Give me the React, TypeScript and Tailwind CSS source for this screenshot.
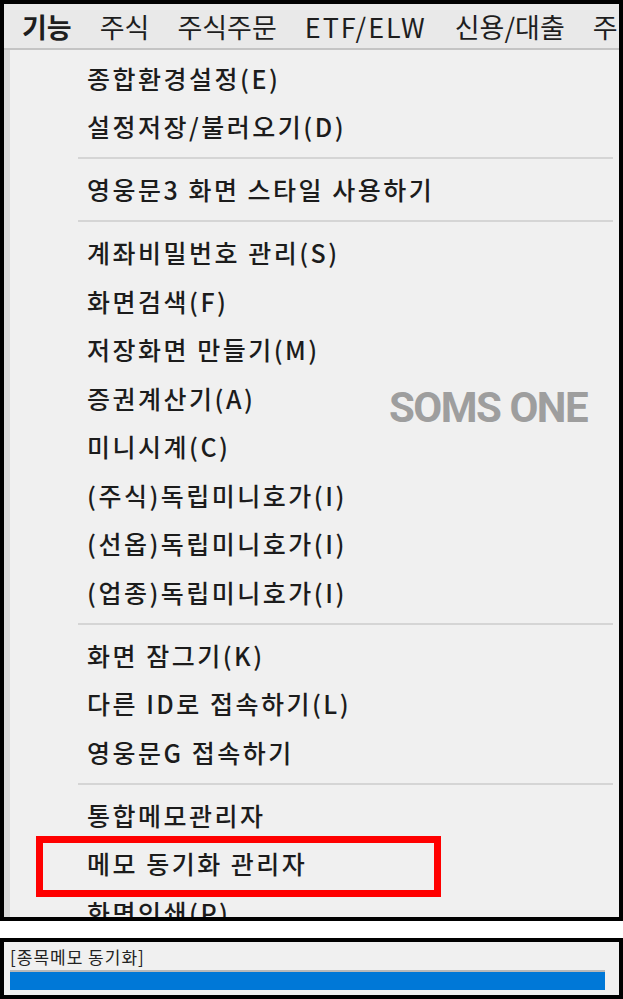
import React from "react";

type Entry = { t: string } | { sep: true };

const entries: Entry[] = [
  { t: "종합환경설정(E)" },
  { t: "설정저장/불러오기(D)" },
  { sep: true },
  { t: "영웅문3 화면 스타일 사용하기" },
  { sep: true },
  { t: "계좌비밀번호 관리(S)" },
  { t: "화면검색(F)" },
  { t: "저장화면 만들기(M)" },
  { t: "증권계산기(A)" },
  { t: "미니시계(C)" },
  { t: "(주식)독립미니호가(I)" },
  { t: "(선옵)독립미니호가(I)" },
  { t: "(업종)독립미니호가(I)" },
  { sep: true },
  { t: "화면 잠그기(K)" },
  { t: "다른 ID로 접속하기(L)" },
  { t: "영웅문G 접속하기" },
  { sep: true },
  { t: "통합메모관리자" },
  { t: "메모 동기화 관리자" },
  { t: "화면인쇄(P)" },
];

const font = { fontFamily: '"Noto Sans CJK KR", "Noto Sans", sans-serif' };

export default function App() {
  return (
    <div className="w-[623px] h-[999px] bg-white flex flex-col" style={font}>
      <div className="h-[921px] border-4 border-black flex flex-col overflow-hidden relative">
        <div className="h-[44px] shrink-0 bg-[#e9e9e9] flex items-center pl-[18px] gap-[28px] text-[27px] text-[#1e1e1e] leading-none whitespace-nowrap">
          <span className="font-bold">기능</span>
          <span>주식</span>
          <span>주식주문</span>
          <span className="tracking-[2px]">ETF/ELW</span>
          <span>신용/대출</span>
          <span>주</span>
        </div>
        <div className="h-[2px] shrink-0 bg-[#c4c4c4]" />
        <div className="flex-1 flex min-h-0">
          <div className="w-[6px] bg-[#d9d9d9]" />
          <div className="flex-1 bg-[#f0f0f0] pt-[4px] pr-[6px]">
            {entries.map((e, i) =>
              "sep" in e ? (
                <div key={i} className="h-[14.5px] flex items-center pl-[68px]">
                  <div className="h-[2px] w-full bg-[#d5d5d5]" />
                </div>
              ) : (
                <div
                  key={i}
                  className="h-[48.5px] flex items-center pl-[77px] text-[25px] font-medium tracking-[2.5px] text-[#1c1c1c] whitespace-nowrap leading-none"
                >
                  {e.t}
                </div>
              )
            )}
          </div>
        </div>
        <div
          className="absolute left-[385px] top-[383px] text-[42px] font-bold text-[#9e9e9e] leading-none tracking-[-1.5px]"
          style={{ fontFamily: "Roboto, sans-serif" }}
        >
          SOMS ONE
        </div>
        <div className="absolute left-[32px] top-[832px] w-[405px] h-[61px] border-[7px] border-[#ff0000]" />
      </div>
      <div className="h-[17px]" />
      <div className="h-[61px] border-4 border-black bg-[#f0f0f0] flex flex-col pl-[6px] pr-[14px]">
        <div className="h-[28px] flex items-center text-[17px] tracking-[1px] text-[#222] leading-none">[종목메모 동기화]</div>
        <div className="h-[20px] border-t-2 border-[#b8b8b8] bg-[#0078d7]" />
      </div>
    </div>
  );
}
